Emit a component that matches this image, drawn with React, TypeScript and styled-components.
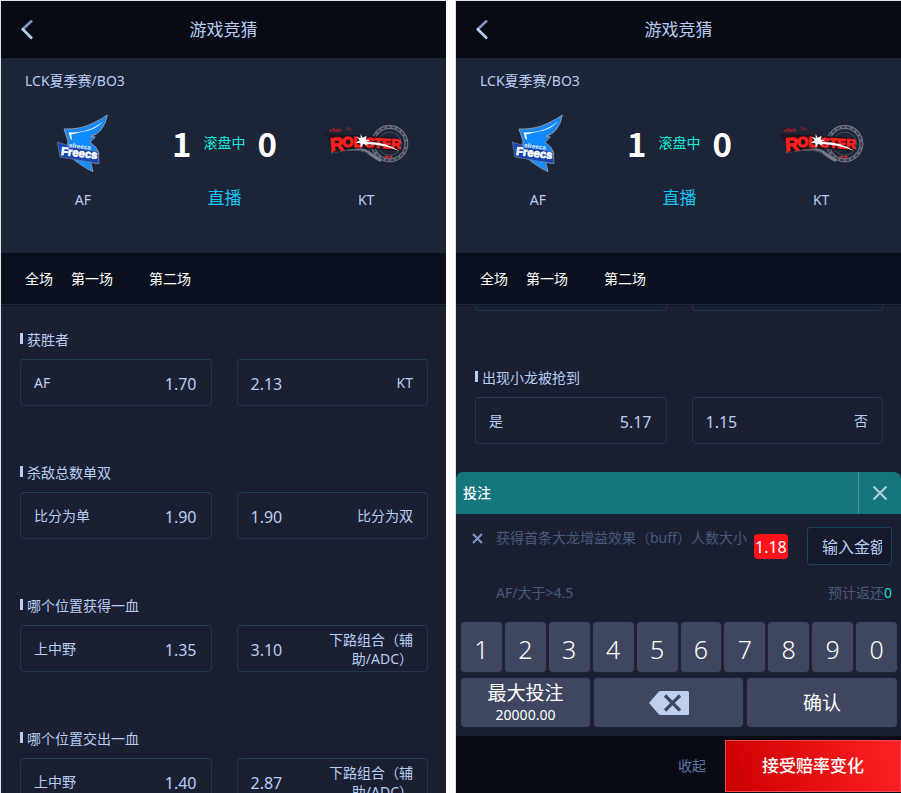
import React from "react";
import styled, { createGlobalStyle } from "styled-components";

const GlobalStyle = createGlobalStyle`
  * { box-sizing: border-box; }
  body {
    margin: 0;
    background: #fff;
    font-family: "Noto Sans", "Noto Sans CJK SC", sans-serif;
    font-size: 14px;
    line-height: 20px;
    color: #b9cdf4;
    text-spacing-trim: space-all;
  }
  button, input {
    margin: 0;
    padding: 0;
    border: 0;
    background: none;
    font: inherit;
    color: inherit;
  }
  button { cursor: pointer; }
  h1, h2, p { margin: 0; font-weight: 400; }
`;

const Page = styled.div`
  display: grid;
  grid-template-columns: 1fr 1fr;
  gap: 9px;
  height: 100vh;
  overflow: hidden;
`;

const Screen = styled.main`
  display: flex;
  flex-direction: column;
  min-width: 0;
  min-height: 0;
  border-top: 1px solid #dde5e5;
  border-left: 1px solid #dde5e5;
  background: #1a2031;
`;

const Header = styled.header`
  flex: none;
  display: grid;
  grid-template-columns: 52px 1fr 52px;
  align-items: center;
  height: 57px;
  background: #080b14;
`;

const BackButton = styled.button`
  display: flex;
  align-items: center;
  height: 40px;
  padding-left: 19px;
`;

const Title = styled.h1`
  font-size: 17px;
  line-height: 24px;
  text-align: center;
`;

const Match = styled.section`
  flex: none;
  padding: 13px 0 43px;
  background: #1c2437;
`;

const League = styled.p`
  padding-left: 24px;
`;

const Teams = styled.div`
  display: grid;
  grid-template-columns: repeat(3, 1fr);
  margin-top: 22px;
  padding: 0 9px 0 11px;
`;

const Column = styled.div`
  display: flex;
  flex-direction: column;
  align-items: center;
  justify-content: space-between;
  height: 97px;
`;

const LogoBox = styled.div`
  display: flex;
  align-items: center;
  justify-content: center;
  height: 60px;
`;

const Score = styled.div`
  display: flex;
  align-items: center;
  gap: 12px;
  height: 60px;
`;

const Points = styled.span`
  font-family: "Noto Sans CJK SC", sans-serif;
  font-size: 33px;
  line-height: 40px;
  font-weight: 700;
  color: #fff;
`;

const Status = styled.span`
  color: #12eedd;
`;

const LiveLink = styled.a`
  font-size: 17px;
  line-height: 24px;
  color: #18c4f5;
  text-decoration: none;
`;

const Tabs = styled.nav`
  flex: none;
  display: flex;
  align-items: center;
  height: 52px;
  padding-left: 24px;
  border-bottom: 1px solid #1c2c3d;
  background: #0a101d;
`;

const Tab = styled.button<{ $gap: number }>`
  margin-right: ${(p) => p.$gap}px;
  color: #fff;
`;

const Markets = styled.div<{ $continued?: boolean }>`
  flex: 1;
  min-height: 0;
  overflow: hidden;
  padding: ${(p) => (p.$continued ? "0" : "25px")} 18px 0 19px;
  box-shadow: inset 0 1px #121827;
`;

const Market = styled.section`
  margin-bottom: 57px;
`;

const MarketTitle = styled.h2`
  display: flex;
  align-items: center;
  gap: 4px;
  margin-bottom: 9px;
  font-size: 14px;
  line-height: 20px;

  &::before {
    content: "";
    width: 3px;
    height: 11px;
    margin-bottom: 3px;
    background: #b9cdf4;
  }
`;

const Options = styled.div`
  display: grid;
  grid-template-columns: 1fr 1fr;
  gap: 25px;
`;

const Option = styled.button`
  display: flex;
  align-items: center;
  justify-content: space-between;
  height: 47px;
  padding: 0 14px 0 13px;
  border: 1px solid #22364a;
  border-top-color: #264250;
  border-radius: 4px;
`;

const OptionName = styled.span`
  max-width: 88px;
  line-height: 19px;
  text-align: right;
`;

const Odds = styled.span`
  padding-top: 2px;
  font-size: 16px;
`;

const CardEnds = styled(Options)`
  height: 6px;
  margin-bottom: 57px;
`;

const CardEnd = styled.div`
  border: 1px solid #22364a;
  border-top: 0;
  border-radius: 0 0 4px 4px;
`;

const Sheet = styled.section`
  flex: none;
  background: #1a2031;
`;

const SheetHeader = styled.header`
  display: flex;
  align-items: center;
  justify-content: space-between;
  height: 42px;
  padding-left: 7px;
  border-radius: 7px 7px 0 0;
  background: #14767d;
`;

const SheetTitle = styled.h2`
  font-size: 14px;
  line-height: 20px;
  font-weight: 500;
  color: #fff;
`;

const CloseButton = styled.button`
  display: flex;
  align-items: center;
  justify-content: center;
  width: 43px;
  height: 42px;
  border-left: 1px solid #4d8f9c;
`;

const BetRow = styled.div`
  display: flex;
  align-items: flex-start;
  padding: 13px 9px 0 16px;
`;

const RemoveButton = styled.button`
  display: flex;
  align-items: center;
  width: 24px;
  height: 22px;
`;

const BetName = styled.p`
  line-height: 22px;
  white-space: nowrap;
  color: #4a5a7d;
`;

const OddsBadge = styled.span`
  width: 34px;
  height: 25px;
  margin: 7px auto 0 7px;
  border-radius: 4px;
  background: #ff1219;
  font-size: 16px;
  line-height: 27px;
  text-align: center;
  color: #fff;
`;

const AmountInput = styled.input`
  width: 85px;
  height: 38px;
  padding: 2px 9px 0 14px;
  border: 1px solid #17495a;
  border-radius: 3px;
  background: #141a29;
  font-size: 16px;

  &::placeholder {
    color: #b9cdf4;
    opacity: 1;
  }
`;

const Summary = styled.div`
  display: flex;
  justify-content: space-between;
  margin-top: 18px;
  padding: 0 9px 0 40px;
  color: #4a5a7d;
`;

const Payout = styled.span`
  color: #20d8d0;
`;

const Keypad = styled.div`
  display: grid;
  gap: 6px;
  padding: 19px 4px 9px 5px;
`;

const DigitRow = styled.div`
  display: grid;
  grid-template-columns: repeat(10, 1fr);
  gap: 3px;
`;

const ActionRow = styled.div`
  display: grid;
  grid-template-columns: 129fr 149fr 150fr;
  gap: 4px;
`;

const Key = styled.button`
  display: flex;
  flex-direction: column;
  align-items: center;
  justify-content: center;
  border-radius: 4px;
  background: #3e475f;
  box-shadow: 0 0 2px #2a3449;
  color: #fff;
`;

const DigitKey = styled(Key)`
  height: 50px;
  padding-top: 3px;
  font-size: 25px;
  line-height: 30px;
  font-weight: 300;
`;

const ActionKey = styled(Key)`
  height: 49px;
  font-size: 19px;
  line-height: 22px;
`;

const MaxAmount = styled.span`
  padding-top: 2px;
  font-size: 14px;
  line-height: 18px;
`;

const BottomBar = styled.footer`
  display: flex;
  align-items: stretch;
  justify-content: flex-end;
  height: 57px;
  padding: 4px 0 1px;
  background: #080b14;
`;

const CollapseButton = styled.button`
  padding: 0 19px;
  color: #6076a5;
`;

const AcceptButton = styled.button`
  width: 176px;
  border: 1px solid #ef4a50;
  background: linear-gradient(75deg, #cb0000, #ff2024);
  font-size: 17px;
  font-weight: 500;
  color: #fff;
`;

const BackIcon = () => (
  <svg width="14" height="20" viewBox="0 0 14 20" fill="none" aria-hidden="true">
    <path d="M12 0.500 2.500 9.500" stroke="#8496c0" strokeWidth="2.600" />
    <path d="M2 8.500 12 18.500" stroke="#b9cdf4" strokeWidth="2.600" />
  </svg>
);

const CrossIcon = ({ size, color, width }: { size: number; color: string; width: number }) => (
  <svg width={size} height={size} viewBox="0 0 16 16" fill="none" aria-hidden="true">
    <path d="M1.500 1.500 14.500 14.500M14.500 1.500 1.500 14.500" stroke={color} strokeWidth={width} />
  </svg>
);

const BackspaceIcon = () => (
  <svg width="40" height="24" viewBox="0 0 40 24" aria-hidden="true">
    <path d="M12 0H38.500Q40 0 40 1.500V22.500Q40 24 38.500 24H12Q10.500 24 9.500 23L0 12 9.500 1Q10.500 0 12 0Z" fill="#bfd0ee" />
    <path d="M16 4.500 31 19.500M31 4.500 16 19.500" stroke="#3e475f" strokeWidth="3.200" />
  </svg>
);

const FreecsLogo = () => (
  <svg width="54" height="60" viewBox="46 24 162 180" role="img" aria-label="Afreeca Freecs">
    <path
      d="M70 72Q120 74 158 54 184 42 200 30 196 56 180 76 170 88 150 94L164 96 148 112 165 126 174 142 174 176 150 172 157 200Q134 190 102 166L80 130 82 108Z"
      fill="#1488f4"
      stroke="#8c98aa"
      strokeWidth="3"
    />
    <path d="M84 82Q130 84 162 66 178 57 188 48 170 70 142 77 110 84 92 88L94 106 88 100Z" fill="#f2faff" />
    <path d="M96 94Q140 88 168 70 156 84 138 92L152 96 134 116 98 114Z" fill="#0f8cff" />
    <path d="M100 162 142 172 154 196Q128 184 100 162Z" fill="#1790fa" />
    <path d="M50 111 68 117 82 122 172 141 175 176 58 156Z" fill="#1647b0" stroke="#7c8496" strokeWidth="2" />
    <text x="84" y="127" fontFamily="Liberation Sans" fontSize="19" fontWeight="700" fill="#dcecff" transform="rotate(6 84 127)">
      afreeca
    </text>
    <text x="60" y="149" fontFamily="Liberation Sans" fontSize="34" fontWeight="700" fill="#fff" stroke="#fff" strokeWidth="2" transform="rotate(7 60 149)">
      Freecs
    </text>
  </svg>
);

const RolsterLogo = () => (
  <svg width="85" height="43" viewBox="42 50 255 129" role="img" aria-label="KT Rolster">
    <g fill="none">
      <circle cx="239" cy="115" r="50" stroke="#737983" strokeWidth="12" />
      <circle cx="239" cy="115" r="50" stroke="#343d4d" strokeWidth="6" strokeDasharray="12 4" />
      <circle cx="239" cy="115" r="35" stroke="#596171" strokeWidth="2" />
      <path d="M64 140Q136 122 174 140 196 158 214 166" stroke="#777d87" strokeWidth="9" />
      <path d="M76 140Q136 126 172 142" stroke="#3c4351" strokeWidth="3" />
    </g>
    <path d="M46 86 130 89 154 90 264 98 272 138 166 129 120 131 68 143 60 108Z" fill="#1b171c" />
    <text x="56" y="80" fontFamily="Liberation Sans" fontSize="16" fontWeight="700" fill="#c81a28">
      olleh
    </text>
    <path d="M106 68H116L126 75M112 76 120 68" fill="none" stroke="#a51f2c" strokeWidth="3" />
    <g fontFamily="Liberation Sans" fontWeight="700" fill="#ff2020" stroke="#ff2020" strokeWidth="3">
      <text x="62" y="138" fontSize="56" transform="rotate(-5 62 138)">R</text>
      <text x="97" y="125" fontSize="43">OL</text>
      <text x="165" y="125" fontSize="40" transform="rotate(3 165 125)">STER</text>
    </g>
    <path d="m152 86 6 11 12-6-3 12 15 1-14 6 5 11-13-6-8 13-1-14-14-2 12-7-9-11 12 5Z" fill="#fff" />
    <path d="M166 110Q226 108 270 138 226 118 168 116Z" fill="#fff" />
    <path d="m230 148 2 4 5 1-4 3 1 5-4-3-5 3 1-5-3-3 5-1ZM243 148l2 4 5 1-4 3 1 5-4-3-5 3 1-5-3-3 5-1Z" fill="#c8262e" />
  </svg>
);

const TopSection = () => (
  <>
    <Header>
      <BackButton aria-label="返回">
        <BackIcon />
      </BackButton>
      <Title>游戏竞猜</Title>
    </Header>
    <Match>
      <League>LCK夏季赛/BO3</League>
      <Teams>
        <Column>
          <LogoBox>
            <FreecsLogo />
          </LogoBox>
          <span>AF</span>
        </Column>
        <Column>
          <Score>
            <Points>1</Points>
            <Status>滚盘中</Status>
            <Points>0</Points>
          </Score>
          <LiveLink href="#live">直播</LiveLink>
        </Column>
        <Column>
          <LogoBox>
            <RolsterLogo />
          </LogoBox>
          <span>KT</span>
        </Column>
      </Teams>
    </Match>
    <Tabs>
      <Tab $gap={18}>全场</Tab>
      <Tab $gap={36}>第一场</Tab>
      <Tab $gap={0}>第二场</Tab>
    </Tabs>
  </>
);

interface MarketData {
  title: string;
  home: [string, string];
  away: [string, string];
}

const MarketBlock = ({ title, home, away }: MarketData) => (
  <Market>
    <MarketTitle>{title}</MarketTitle>
    <Options>
      <Option>
        <OptionName>{home[0]}</OptionName>
        <Odds>{home[1]}</Odds>
      </Option>
      <Option>
        <Odds>{away[1]}</Odds>
        <OptionName>{away[0]}</OptionName>
      </Option>
    </Options>
  </Market>
);

const markets: MarketData[] = [
  { title: "获胜者", home: ["AF", "1.70"], away: ["KT", "2.13"] },
  { title: "杀敌总数单双", home: ["比分为单", "1.90"], away: ["比分为双", "1.90"] },
  { title: "哪个位置获得一血", home: ["上中野", "1.35"], away: ["下路组合（辅助/ADC）", "3.10"] },
  { title: "哪个位置交出一血", home: ["上中野", "1.40"], away: ["下路组合（辅助/ADC）", "2.87"] },
];

const digits = ["1", "2", "3", "4", "5", "6", "7", "8", "9", "0"];

const BetSheet = () => (
  <Sheet>
    <SheetHeader>
      <SheetTitle>投注</SheetTitle>
      <CloseButton aria-label="关闭">
        <CrossIcon size={16} color="#b5d3da" width={2} />
      </CloseButton>
    </SheetHeader>
    <BetRow>
      <RemoveButton aria-label="删除">
        <CrossIcon size={11} color="#8294c0" width={3} />
      </RemoveButton>
      <BetName>获得首条大龙增益效果（buff）人数大小</BetName>
      <OddsBadge>1.18</OddsBadge>
      <AmountInput aria-label="输入金额" placeholder="输入金额" inputMode="decimal" />
    </BetRow>
    <Summary>
      <span>AF/大于&gt;4.5</span>
      <span>
        预计返还<Payout>0</Payout>
      </span>
    </Summary>
    <Keypad>
      <DigitRow>
        {digits.map((d) => (
          <DigitKey key={d}>{d}</DigitKey>
        ))}
      </DigitRow>
      <ActionRow>
        <ActionKey>
          最大投注
          <MaxAmount>20000.00</MaxAmount>
        </ActionKey>
        <ActionKey aria-label="退格">
          <BackspaceIcon />
        </ActionKey>
        <ActionKey>确认</ActionKey>
      </ActionRow>
    </Keypad>
    <BottomBar>
      <CollapseButton>收起</CollapseButton>
      <AcceptButton>接受赔率变化</AcceptButton>
    </BottomBar>
  </Sheet>
);

export default function App() {
  return (
    <>
      <GlobalStyle />
      <Page>
        <Screen>
          <TopSection />
          <Markets>
            {markets.map((m) => (
              <MarketBlock key={m.title} {...m} />
            ))}
          </Markets>
        </Screen>
        <Screen>
          <TopSection />
          <Markets $continued>
            <CardEnds>
              <CardEnd />
              <CardEnd />
            </CardEnds>
            <MarketBlock title="出现小龙被抢到" home={["是", "5.17"]} away={["否", "1.15"]} />
          </Markets>
          <BetSheet />
        </Screen>
      </Page>
    </>
  );
}
